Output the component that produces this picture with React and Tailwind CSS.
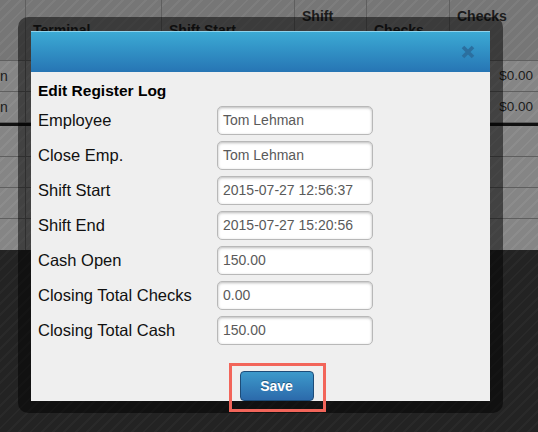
const cols = [26, 136, 133, 72, 83, 88]

const fields = [
  ['Employee', 'Tom Lehman'],
  ['Close Emp.', 'Tom Lehman'],
  ['Shift Start', '2015-07-27 12:56:37'],
  ['Shift End', '2015-07-27 15:20:56'],
  ['Cash Open', '150.00'],
  ['Closing Total Checks', '0.00'],
  ['Closing Total Cash', '150.00'],
]

function Row({ cells, className }) {
  return (
    <div className={`flex ${className}`}>
      {cols.map((w, i) => (
        <div key={i} style={{ width: w }}
          className="shrink-0 border-r border-[#5f5f5f] last:border-r-0 flex items-center overflow-hidden whitespace-nowrap">
          {cells[i]}
        </div>
      ))}
    </div>
  )
}

export default function App() {
  return (
    <div className="relative w-[538px] h-[432px] overflow-hidden font-['Liberation_Sans',Arial,sans-serif] bg-[repeating-linear-gradient(135deg,#232323_0px,#232323_6px,#292929_6px,#292929_8px)]">
      {/* dimmed page table behind the dialog */}
      <div className="text-[#1c1c1c] text-[14px]">
        <Row className="h-[61px] font-bold border-b border-[#5f5f5f] bg-[repeating-linear-gradient(135deg,#767676_0px,#767676_6px,#7d7d7d_6px,#7d7d7d_8px)]"
          cells={[
            '',
            <span className="pl-[7px]">Terminal</span>,
            <span className="pl-[7px]">Shift Start</span>,
            <span className="pl-[7px] leading-[28px]">Shift<br />End</span>,
            <span className="pl-[7px]">Checks</span>,
            <span className="pl-[7px] leading-[28px]">Checks<br />Total</span>,
          ]} />
        <div className="bg-[repeating-linear-gradient(135deg,#858585_0px,#858585_6px,#8c8c8c_6px,#8c8c8c_8px)]">
          {[0, 1].map(r => (
            <Row key={r} className="h-[31px] border-b border-[#5f5f5f] last:border-b-0"
              cells={[<span>n</span>, '', '', '', '', <span className="w-full text-right pr-[5px] text-[13.5px]">$0.00</span>]} />
          ))}
          <div className="h-[3px] bg-[#111]" />
          {[0, 1, 2, 3].map(r => (
            <Row key={r} className="h-[31px] border-b border-[#5f5f5f] last:border-b-0" cells={['', '', '', '', '', '']} />
          ))}
        </div>
      </div>

      {/* modal frame */}
      <div className="absolute left-[18px] top-[17px] w-[485px] h-[396px] rounded-[10px] bg-black/50" />

      {/* modal */}
      <div className="absolute left-[31px] top-[31px] w-[459px] h-[370px] overflow-hidden bg-[#efefef] flex flex-col">
        <div className="h-[41px] shrink-0 border-t border-[#8fd3ec] bg-gradient-to-b from-[#3caad4] to-[#2775b4] flex items-center justify-end pr-[15px]">
          <svg width="14" height="14" viewBox="0 0 14 14">
            <path d="M2 2 L12 12 M12 2 L2 12" stroke="#2b6f9f" strokeWidth="3.6" />
          </svg>
        </div>
        <div className="pl-[7px] pt-[9px]">
          <h2 className="font-bold text-[15.5px] leading-[20px] text-black">Edit Register Log</h2>
          <div className="mt-[5px] flex flex-col gap-[6px]">
            {fields.map(([label, value]) => (
              <div key={label} className="flex items-center h-[29px]">
                <div className="w-[179px] text-[16.5px] text-[#111]">{label}</div>
                <div className="w-[156px] h-[29px] rounded-[5px] border border-[#b8b8b8] bg-white shadow-[inset_0_1px_3px_rgba(0,0,0,0.28)] flex items-center pl-[5px] text-[14px] text-[#5a5a5a]">
                  {value}
                </div>
              </div>
            ))}
          </div>
          <div className="mt-[26px] flex justify-center pr-[7px]">
            <button className="ml-[32px] w-[74px] h-[30px] rounded-[4px] border border-[#1d4c78] bg-gradient-to-b from-[#3d9acb] to-[#2c6aab] text-white font-bold text-[14px] [text-shadow:0_-1px_0_rgba(0,0,0,0.35)]">
              Save
            </button>
          </div>
        </div>
      </div>

      {/* highlight annotation */}
      <div className="absolute left-[229px] top-[363px] w-[97px] h-[49px] border-[3px] border-[#f2655a]" />
    </div>
  )
}
